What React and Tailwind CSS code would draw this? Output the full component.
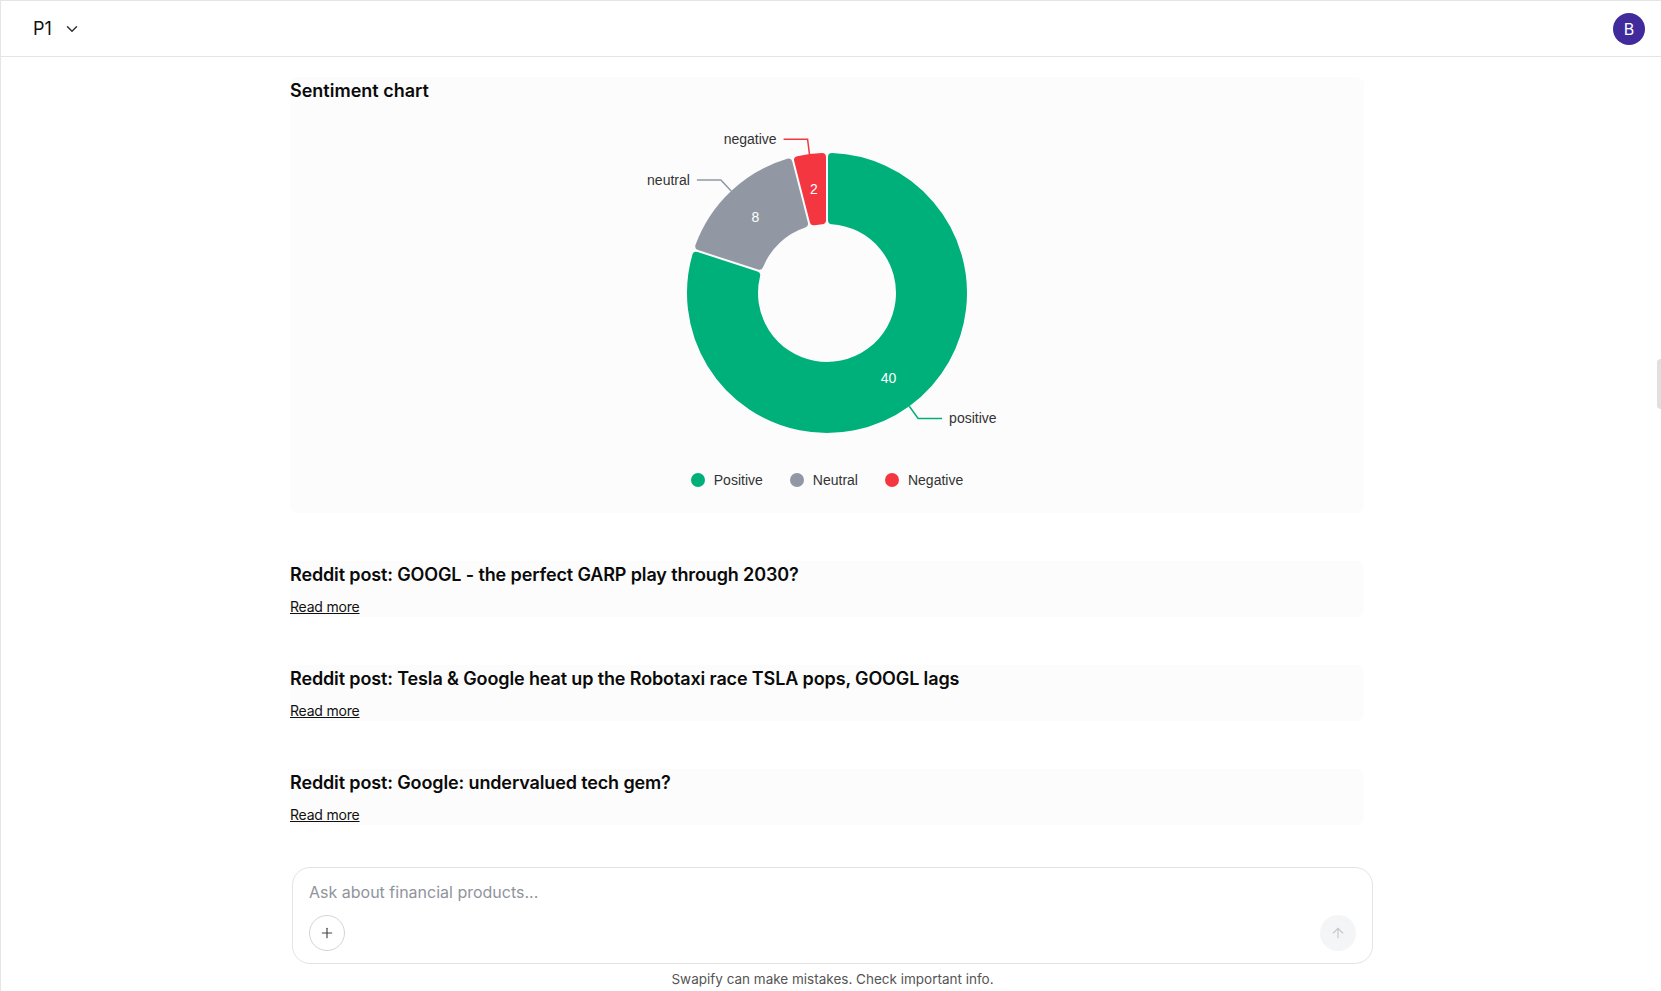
import React from "react";
import { ChevronDown, Plus, ArrowUp } from "lucide-react";

const CX = 537;
const CY = 188;
const RO = 140;
const RI = 69;

const data = [
  { name: "positive", value: 40, color: "#00b07a" },
  { name: "neutral", value: 8, color: "#9198a3" },
  { name: "negative", value: 2, color: "#f43641" },
];

function pt(r, deg) {
  const a = (deg * Math.PI) / 180;
  return [CX + r * Math.sin(a), CY - r * Math.cos(a)];
}

function sectorPath(a0, a1, cr, gap) {
  const ro = RO - cr;
  const ri = RI + cr;
  const dOut = (((cr + gap) / ro) * 180) / Math.PI;
  const dIn = (((cr + gap) / ri) * 180) / Math.PI;
  const o0 = pt(ro, a0 + dOut);
  const o1 = pt(ro, a1 - dOut);
  const i1 = pt(ri, a1 - dIn);
  const i0 = pt(ri, a0 + dIn);
  const largeO = a1 - a0 - 2 * dOut > 180 ? 1 : 0;
  const largeI = a1 - a0 - 2 * dIn > 180 ? 1 : 0;
  return `M${o0[0]},${o0[1]} A${ro},${ro} 0 ${largeO} 1 ${o1[0]},${o1[1]} L${i1[0]},${i1[1]} A${ri},${ri} 0 ${largeI} 0 ${i0[0]},${i0[1]} Z`;
}

function Donut() {
  const total = data.reduce((s, d) => s + d.value, 0);
  let acc = 0;
  const segs = data.map((d) => {
    const a0 = (acc / total) * 360;
    acc += d.value;
    const a1 = (acc / total) * 360;
    return { ...d, a0, a1, mid: (a0 + a1) / 2 };
  });
  return (
    <svg width="1074" height="340" viewBox="0 0 1074 340" className="block">
      {segs.map((s) => (
        <path
          key={s.name}
          d={sectorPath(s.a0, s.a1, 4, 1)}
          fill={s.color}
          stroke={s.color}
          strokeWidth="8"
          strokeLinejoin="round"
        />
      ))}
      {segs.map((s) => {
        const m = pt((RO + RI) / 2, s.mid);
        return (
          <text
            key={s.name + "v"}
            x={m[0]}
            y={m[1]}
            fill="#ffffff"
            fontSize="14"
            fontFamily="'Liberation Sans', Arial, sans-serif"
            textAnchor="middle"
            dominantBaseline="central"
          >
            {s.value}
          </text>
        );
      })}
      {segs.map((s) => {
        const p1 = pt(RO, s.mid);
        const p2 = pt(RO + 15, s.mid);
        const right = p2[0] >= CX;
        const p3x = p2[0] + (right ? 24 : -24);
        return (
          <g key={s.name + "l"}>
            <polyline
              points={`${p1[0]},${p1[1]} ${p2[0]},${p2[1]} ${p3x},${p2[1]}`}
              fill="none"
              stroke={s.color}
              strokeWidth="1.5"
            />
            <text
              x={p3x + (right ? 7 : -7)}
              y={p2[1] - 0.5}
              fill="#333333"
              fontSize="14"
              fontFamily="'Liberation Sans', Arial, sans-serif"
              textAnchor={right ? "start" : "end"}
              dominantBaseline="central"
            >
              {s.name}
            </text>
          </g>
        );
      })}
    </svg>
  );
}

function LegendItem({ color, label }) {
  return (
    <div className="flex items-center">
      <span className="w-[14px] h-[14px] rounded-full" style={{ backgroundColor: color }} />
      <span className="ml-[9px] text-[14px] leading-5 text-[#333]" style={{ fontFamily: "'Liberation Sans', Arial, sans-serif" }}>
        {label}
      </span>
    </div>
  );
}

function Post({ title }) {
  return (
    <div className="rounded-lg bg-[#fcfcfc] h-[56px] flex flex-col">
      <h2 className="text-lg leading-7 font-semibold tracking-[-0.13px] text-[#0a0a0a]">{title}</h2>
      <a className="mt-2 text-sm leading-5 underline tracking-[-0.2px] text-[#111] w-fit" href="#">
        Read more
      </a>
    </div>
  );
}

export default function App() {
  return (
    <div
      className="h-[991px] w-full flex flex-col bg-white border-t border-l border-[#e5e5e5] overflow-hidden text-[#0a0a0a]"
      style={{ fontFamily: "Inter, 'Noto Sans', sans-serif" }}
    >
      <header className="h-[56px] shrink-0 border-b border-[#e5e5e5] flex items-center justify-between pl-8 pr-4">
        <div className="flex items-center">
          <span className="text-lg leading-7 text-[#111]">P1</span>
          <ChevronDown size={18} strokeWidth={2} className="ml-[11px] text-[#333]" />
        </div>
        <div className="w-8 h-8 rounded-full bg-[#412a9c] flex items-center justify-center text-white text-base">
          B
        </div>
      </header>

      <main className="relative flex-1 overflow-hidden">
        <div className="w-[1074px] ml-[289px] pt-5 flex flex-col gap-12">
          <section className="rounded-lg bg-[#fcfcfc] flex flex-col pb-[23px]">
            <h2 className="text-lg leading-7 font-semibold">Sentiment chart</h2>
            <Donut />
            <div className="mt-[25px] flex justify-center gap-[27px]">
              <LegendItem color="#00b07a" label="Positive" />
              <LegendItem color="#9198a3" label="Neutral" />
              <LegendItem color="#f43641" label="Negative" />
            </div>
          </section>
          <Post title="Reddit post: GOOGL - the perfect GARP play through 2030?" />
          <Post title="Reddit post: Tesla & Google heat up the Robotaxi race TSLA pops, GOOGL lags" />
          <Post title="Reddit post: Google: undervalued tech gem?" />
        </div>
        <div className="absolute right-0 top-[302px] w-[4px] h-[50px] rounded-l-sm bg-[#e0e0e0]" />
      </main>

      <footer className="shrink-0 h-[124px] flex flex-col">
        <div className="ml-[291px] w-[1081px] h-[97px] shrink-0 rounded-[18px] border border-[#e3e3e3] bg-white flex flex-col px-4 pt-[12px]">
          <div className="text-base leading-6 text-[#8f949c]">Ask about financial products...</div>
          <div className="mt-[11px] flex items-center justify-between">
            <button className="w-9 h-9 rounded-full border border-[#d4d4d4] flex items-center justify-center text-[#444]">
              <Plus size={16} strokeWidth={1.75} />
            </button>
            <button className="w-9 h-9 rounded-full bg-[#f4f5f6] flex items-center justify-center text-[#c4c8cd]">
              <ArrowUp size={16} strokeWidth={1.75} />
            </button>
          </div>
        </div>
        <p className="mt-[5px] ml-[291px] w-[1081px] text-center text-[13.5px] leading-5 text-[#555]">
          Swapify can make mistakes. Check important info.
        </p>
      </footer>
    </div>
  );
}
